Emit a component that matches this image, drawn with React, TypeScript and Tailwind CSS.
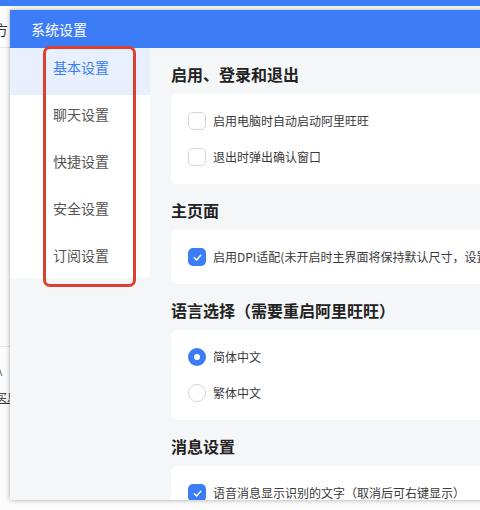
import React from "react";

const menu = ["基本设置", "聊天设置", "快捷设置", "安全设置", "订阅设置"];

type Row = { kind: "check" | "radio"; on: boolean; label: string };

const sections: { title: string; rows: Row[] }[] = [
  {
    title: "启用、登录和退出",
    rows: [
      { kind: "check", on: false, label: "启用电脑时自动启动阿里旺旺" },
      { kind: "check", on: false, label: "退出时弹出确认窗口" },
    ],
  },
  {
    title: "主页面",
    rows: [
      {
        kind: "check",
        on: true,
        label: "启用DPI适配(未开启时主界面将保持默认尺寸，设置后重启生效)",
      },
    ],
  },
  {
    title: "语言选择（需要重启阿里旺旺）",
    rows: [
      { kind: "radio", on: true, label: "简体中文" },
      { kind: "radio", on: false, label: "繁体中文" },
    ],
  },
  {
    title: "消息设置",
    rows: [
      { kind: "check", on: true, label: "语音消息显示识别的文字（取消后可右键显示）" },
    ],
  },
];

function Checkbox({ on }: { on: boolean }) {
  if (!on) {
    return <span className="w-[18px] h-[18px] rounded-[5px] border border-[#d4d6da] bg-white shrink-0" />;
  }
  return (
    <span className="w-[18px] h-[18px] rounded-[5px] bg-[#3c7cf6] shrink-0 flex items-center justify-center">
      <svg width="11" height="11" viewBox="0 0 12 12" fill="none">
        <path d="M2.5 6.2 5 8.6 9.6 3.6" stroke="white" strokeWidth="1.6" strokeLinecap="round" strokeLinejoin="round" />
      </svg>
    </span>
  );
}

function Radio({ on }: { on: boolean }) {
  if (!on) {
    return <span className="w-[18px] h-[18px] rounded-full border border-[#d4d6da] bg-white shrink-0" />;
  }
  return (
    <span className="w-[18px] h-[18px] rounded-full bg-[#3c7cf6] shrink-0 flex items-center justify-center">
      <span className="w-[6px] h-[6px] rounded-full bg-white" />
    </span>
  );
}

export default function App() {
  return (
    <div
      className="relative w-[480px] h-[510px] overflow-hidden bg-[#f1f2f4]"
      style={{ fontFamily: '"Noto Sans CJK SC", "Noto Sans", sans-serif' }}
    >
      {/* main window behind the dialog */}
      <div className="absolute inset-0 bg-[#fcfcfd]">
        <div className="h-[6px] bg-[#3c7cf6]" />
        <div className="h-[42px] border-b border-[#e4e5e8] flex items-center">
          <span className="-ml-[6px] mt-[6px] text-[14px] text-[#333]">方</span>
        </div>
        <div className="h-[298px]" />
        <div className="border-t border-[#e4e5e8] pt-[10px]">
          <div className="-ml-[8px] text-[18px] leading-[22px] text-[#777] font-light">A</div>
          <div className="-ml-[4px] mt-[10px] text-[11px] text-[#333] underline">买息</div>
        </div>
      </div>

      {/* settings dialog */}
      <div className="absolute left-[10px] top-[10px] w-[520px] h-[490px] bg-[#f5f6f8] shadow-[0_0_5px_rgba(0,0,0,0.35)] flex flex-col">
        <div className="h-[38px] bg-[#3c7cf6] shrink-0 flex items-center pl-[21px] text-[14px] text-white">
          系统设置
        </div>
        <div className="flex flex-1 min-h-0">
          <div className="w-[140px] shrink-0">
            <div className="bg-white h-[230px] overflow-hidden rounded-br-[4px]">
              {menu.map((m, i) => (
                <div
                  key={m}
                  className={
                    "h-[47px] flex items-center pb-[8px] pl-[43px] text-[14px] " +
                    (i === 0 ? "bg-[#e9f0fd] text-[#3c7cf6]" : "text-[#555]")
                  }
                >
                  {m}
                </div>
              ))}
            </div>
          </div>
          <div className="flex-1 pl-[21px] overflow-hidden">
            {sections.map((s) => (
              <div key={s.title}>
                <div className="pt-[15px] pb-[9px] h-[46px] text-[16px] leading-[22px] font-bold text-[#222] whitespace-nowrap">
                  {s.title}
                </div>
                <div className="bg-white rounded-[6px] py-[9px] pl-[17px]">
                  {s.rows.map((r) => (
                    <div key={r.label} className="h-[36px] flex items-center gap-[7px]">
                      {r.kind === "check" ? <Checkbox on={r.on} /> : <Radio on={r.on} />}
                      <span className="text-[12px] text-[#3a3a3a] whitespace-nowrap">{r.label}</span>
                    </div>
                  ))}
                </div>
              </div>
            ))}
          </div>
        </div>
      </div>

      {/* red highlight around the menu */}
      <div className="absolute left-[43px] top-[46px] w-[93px] h-[241px] border-[3px] border-[#dc4130] rounded-[7px]" />
    </div>
  );
}
